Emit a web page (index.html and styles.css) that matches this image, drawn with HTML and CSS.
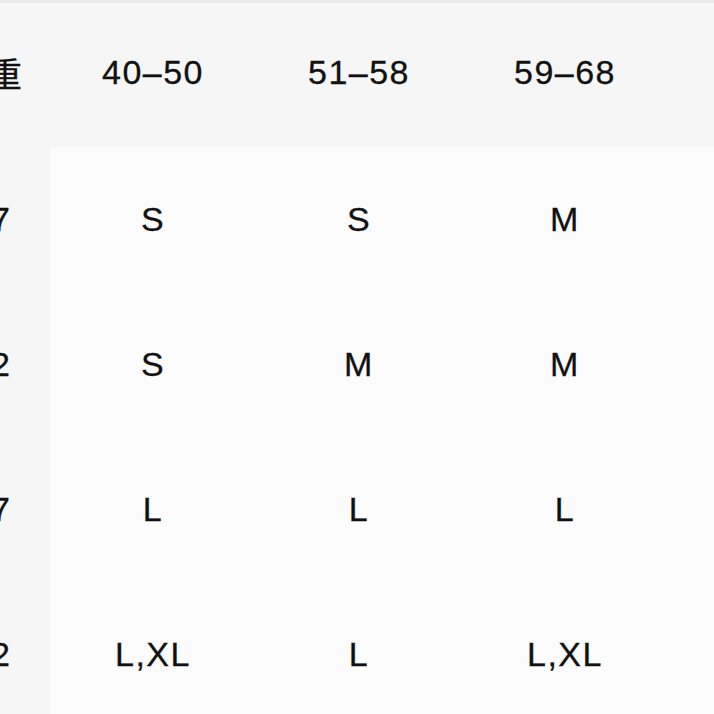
FILE: index.html
```html
<!DOCTYPE html>
<html lang="zh">
<head>
<meta charset="utf-8">
<title>尺码表</title>
<link rel="stylesheet" href="styles.css">
</head>
<body>
<div class="viewport">
  <div class="chart">
    <div class="cell head label">体重</div>
    <div class="cell head">40–50</div>
    <div class="cell head">51–58</div>
    <div class="cell head">59–68</div>
    <div class="cell head fill"></div>

    <div class="cell label">157</div>
    <div class="cell">S</div>
    <div class="cell">S</div>
    <div class="cell">M</div>
    <div class="cell fill"></div>

    <div class="cell label">162</div>
    <div class="cell">S</div>
    <div class="cell">M</div>
    <div class="cell">M</div>
    <div class="cell fill"></div>

    <div class="cell label">167</div>
    <div class="cell">L</div>
    <div class="cell">L</div>
    <div class="cell">L</div>
    <div class="cell fill"></div>

    <div class="cell label">172</div>
    <div class="cell">L,XL</div>
    <div class="cell">L</div>
    <div class="cell">L,XL</div>
    <div class="cell fill"></div>
  </div>
</div>
</body>
</html>
```

FILE: styles.css
```css
html, body {
  margin: 0;
  padding: 0;
  background: #fcfcfc;
}

.viewport {
  width: 714px;
  height: 714px;
  overflow: hidden;
  border-top: 3px solid #ebebeb;
  box-sizing: border-box;
}

.chart {
  display: grid;
  grid-template-columns: 150px 206px 206px 206px 46px;
  grid-template-rows: 144px 145px 145px 145px 145px;
  margin-left: -100px;
  font-family: "Liberation Sans", Arial, "Noto Sans CJK SC", sans-serif;
  font-size: 34px;
  letter-spacing: 1.5px;
  color: #111111;
  -webkit-text-stroke: 0.3px #111111;
}

.cell {
  display: flex;
  align-items: center;
  justify-content: center;
  background: #fcfcfc;
}

.head {
  background: #f6f6f6;
  padding-bottom: 6px;
}

.label {
  background: #f6f6f6;
  justify-content: flex-end;
  padding-right: 40px;
  letter-spacing: 0;
}

.head.label {
  padding-right: 28px;
}
```
